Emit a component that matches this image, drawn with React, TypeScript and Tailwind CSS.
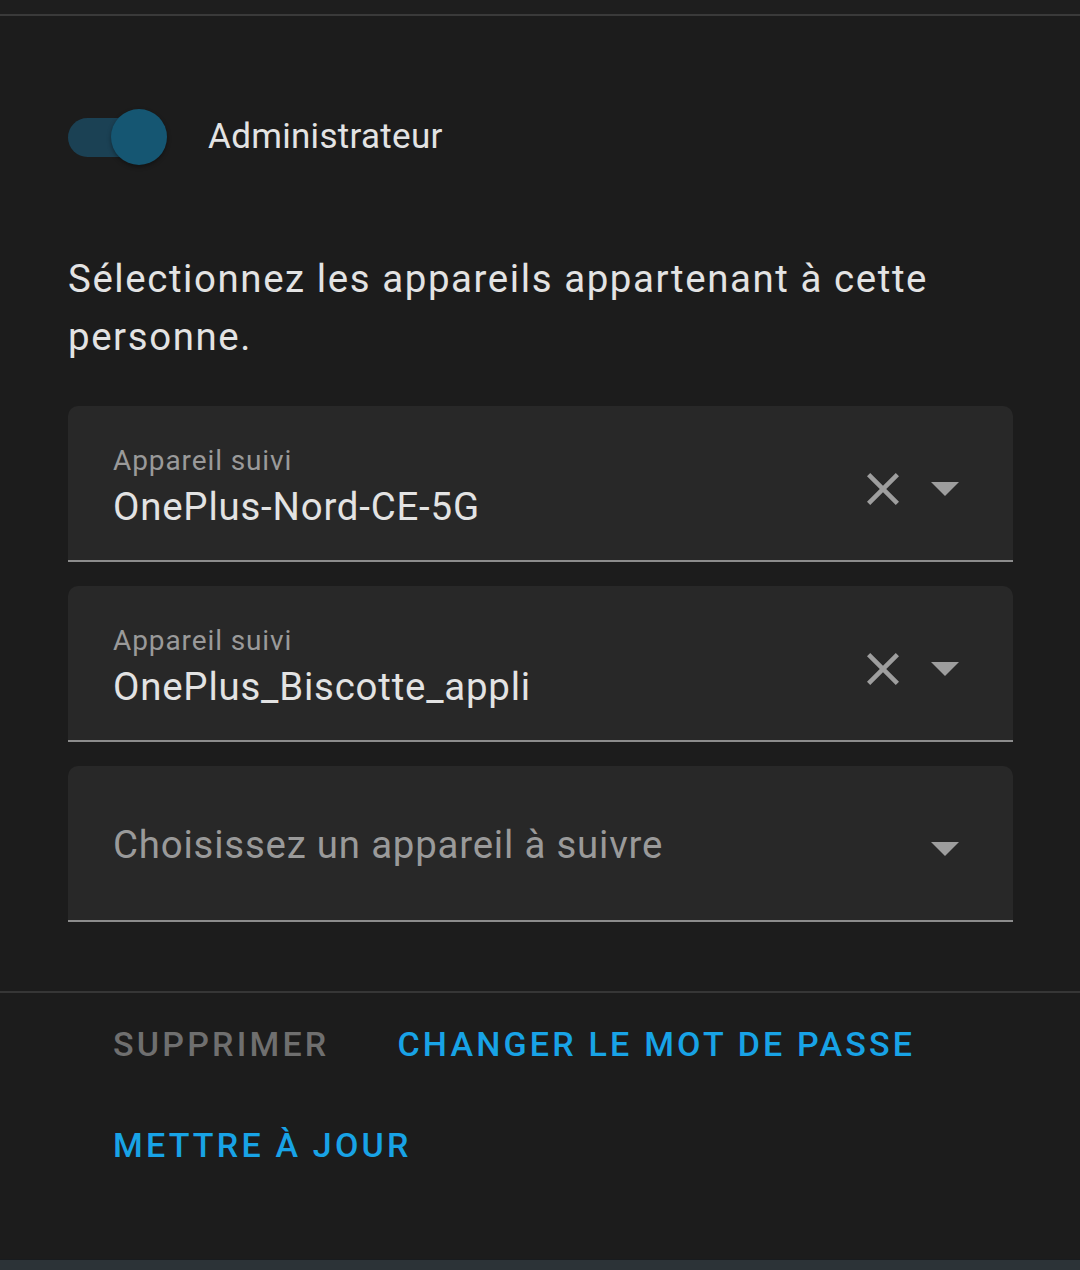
import React from "react";

const font = { fontFamily: "Roboto, 'Noto Sans', sans-serif" };

const CloseIcon = () => (
  <svg width="32" height="32" viewBox="5 5 14 14" className="fill-[#9e9e9e]">
    <path d="M19,6.41L17.59,5L12,10.59L6.41,5L5,6.41L10.59,12L5,17.59L6.41,19L12,13.41L17.59,19L19,17.59L13.41,12L19,6.41Z" />
  </svg>
);

const Caret = () => (
  <svg width="28" height="14" viewBox="7 10 10 5" className="fill-[#9e9e9e]">
    <path d="M7,10L12,15L17,10H7Z" />
  </svg>
);

interface DeviceFieldProps {
  label?: string;
  value?: string;
  placeholder?: string;
}

const DeviceField = ({ label, value, placeholder }: DeviceFieldProps) => {
  return (
    <div className="flex h-[156px] items-center rounded-t-[10px] border-b-2 border-[#8c8c8c] bg-[#282828] pl-[45px] pr-[54px]">
      <div className="min-w-0 flex-1">
        {value ? (
          <div className="flex flex-col pt-[7px]">
            <span className="text-[28px] leading-[34px] tracking-[0.9px] text-[#9a9a9a]">{label}</span>
            <span className="mt-[6px] text-[38.4px] leading-[46px] tracking-[0.8px] text-[#e3e3e3]">{value}</span>
          </div>
        ) : (
          <div className="pt-[4px] text-[38.4px] leading-[46px] tracking-[0.8px] text-[#9a9a9a]">{placeholder}</div>
        )}
      </div>
      <div className="flex items-center gap-[32px] pt-[12px]">
        {value && <CloseIcon />}
        <Caret />
      </div>
    </div>
  );
};

const ActionButton = ({ children, muted }: { children: React.ReactNode; muted?: boolean }) => (
  <button
    className={`text-[34px] font-medium uppercase leading-[40px] tracking-[3.2px] ${
      muted ? "text-[#6f6f6f]" : "text-[#18a3e6]"
    }`}
  >
    {children}
  </button>
);

export default function App() {
  return (
    <div className="flex min-h-[1270px] w-[1080px] flex-col bg-[#1c1c1c]" style={font}>
      <div className="h-[14px] bg-[#1e1e1e]" />
      <div className="h-[2px] bg-[#3a3a3a]" />

      <div className="pl-[68px] pr-[67px] pt-[93px]">
        <div className="flex h-[56px] items-center">
          <div className="relative h-[39px] w-[98px] shrink-0 rounded-full bg-[#1b4154]">
            <div className="absolute left-[43px] top-[-8.5px] h-[56px] w-[56px] rounded-full bg-[#155672] shadow-[0_2px_4px_rgba(0,0,0,0.35)]" />
          </div>
          <span className="ml-[42px] text-[35px] leading-[40px] tracking-[0.3px] text-[#e3e3e3]">Administrateur</span>
        </div>

        <p className="mt-[85px] text-[38.4px] leading-[58px] tracking-[1.6px] text-[#e3e3e3]">
          Sélectionnez les appareils appartenant à cette personne.
        </p>

        <div className="mt-[40px] flex flex-col gap-[24px]">
          <DeviceField label="Appareil suivi" value="OnePlus-Nord-CE-5G" />
          <DeviceField label="Appareil suivi" value="OnePlus_Biscotte_appli" />
          <DeviceField placeholder="Choisissez un appareil à suivre" />
        </div>
      </div>

      <div className="mt-[69px] h-[2px] bg-[#363636]" />

      <div className="flex h-[266px] flex-wrap content-start gap-x-[68px] gap-y-[61px] pl-[113px] pr-[60px] pt-[31px]">
        <ActionButton muted>Supprimer</ActionButton>
        <ActionButton>Changer le mot de passe</ActionButton>
        <ActionButton>Mettre à jour</ActionButton>
      </div>

      <div className="h-[11px] border-t border-[#181b1e] bg-[#2c3337]" />
    </div>
  );
}
